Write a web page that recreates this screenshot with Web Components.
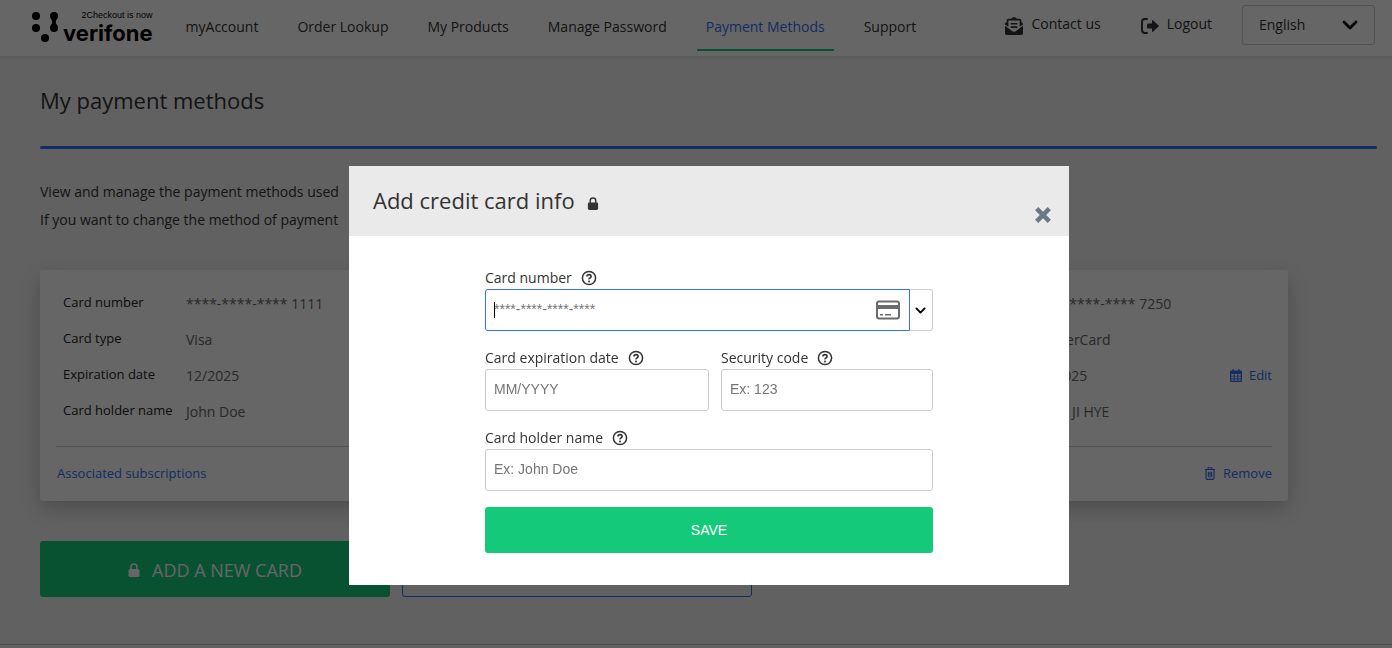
<!DOCTYPE html>
<html lang="en">
<head>
<meta charset="utf-8">
<title>Payment Methods</title>
<style>
    body {
        margin: 0;
        height: 100vh;
        overflow: hidden;
        background: #f2f2f2;
        color: #333;
        font: 14px/20px "Open Sans", sans-serif;
    }
</style>
</head>
<body>
<account-page></account-page>

<script>
const ICONS = {
    mail: ["0 0 512 512", `<path fill="currentColor" d="M176 216h160c8.84 0 16-7.16 16-16v-16c0-8.84-7.16-16-16-16H176c-8.84 0-16 7.16-16 16v16c0 8.84 7.16 16 16 16zm-16 80c0 8.84 7.16 16 16 16h160c8.84 0 16-7.16 16-16v-16c0-8.84-7.16-16-16-16H176c-8.84 0-16 7.16-16 16v16zm96 121.13c-16.42 0-32.84-5.06-46.86-15.19L0 250.86V464c0 26.51 21.49 48 48 48h416c26.51 0 48-21.49 48-48V250.86L302.86 401.94c-14.02 10.12-30.44 15.19-46.86 15.19zm237.61-254.18c-8.85-6.94-17.24-13.47-29.61-22.81V96c0-26.51-21.49-48-48-48h-77.55c-3.04-2.2-5.87-4.26-9.04-6.56C312.6 29.17 279.2-.35 256 0c-23.2-.35-56.59 29.17-73.41 41.44-3.17 2.3-6 4.36-9.04 6.56H96c-26.51 0-48 21.49-48 48v44.14c-12.37 9.33-20.76 15.87-29.61 22.81A47.995 47.995 0 0 0 0 200.72v10.65l96 69.35V96h320v184.72l96-69.35v-10.65c0-14.74-6.78-28.67-18.39-37.77z"/>`],
    logout: ["0 0 18 18", `<path fill="none" stroke="currentColor" stroke-width="2" stroke-linecap="round" d="M6 2H4Q1 2 1 5v8q0 3 3 3h2"/><path fill="currentColor" d="M6 8q0-1.500 1.500-1.500H11V4q0-1.500 1.200-.5l5.400 5q.6.500 0 1l-5.400 5q-1.200 1-1.200-.5v-2.500H7.500Q6 11.500 6 10z"/>`],
    chevron: ["0 0 16 16", `<path fill="none" stroke="currentColor" stroke-width="2.800" stroke-linecap="round" stroke-linejoin="round" d="M2 5l6 6 6-6"/>`],
    lock: ["0 0 12 14", `<path fill="none" stroke="currentColor" stroke-width="1.500" d="M3 7V4a3 3 0 0 1 6 0v3"/><rect x=".5" y="6" width="11" height="8" rx="1.500" fill="currentColor"/>`],
    close: ["0 0 16 16", `<path fill="none" stroke="currentColor" stroke-width="4.500" d="M1.700 1.700l12.600 12.600M14.300 1.700L1.700 14.300"/>`],
    help: ["0 0 16 16", `<g fill="none" stroke="currentColor" stroke-width="1.500"><circle cx="8" cy="8" r="6.600"/><path stroke-width="1.700" d="M5.900 6.500Q6 4.600 8 4.600t2.100 1.700Q10.100 7.300 9 7.900T8 9.400"/></g><circle cx="8" cy="11.400" r="1" fill="currentColor"/>`],
    card: ["0 0 24 20", `<rect x="1" y="1.500" width="22" height="17" rx="2" fill="none" stroke="currentColor" stroke-width="2"/><path fill="currentColor" d="M1 5h22v4H1zM4 14h3v1.500H4zM9 14h6v1.500H9z"/>`],
    calendar: ["0 0 12 13", `<path fill="currentColor" fill-rule="evenodd" d="M2.500 0h1.300v1.500h4.400V0h1.300v1.500H11q1 0 1 1V12q0 1-1 1H1q-1 0-1-1V2.500q0-1 1-1h1.500zM1.300 5v1.700h2.400V5zm3.400 0v1.700h2.600V5zm3.600 0v1.700h2.400V5zM1.300 7.600v1.700h2.400V7.600zm3.400 0v1.700h2.600V7.600zm3.600 0v1.700h2.400V7.600zM1.300 10.200v1.600h2.400v-1.600zm3.400 0v1.600h2.600v-1.600zm3.600 0v1.600h2.400v-1.600z"/>`],
    trash: ["0 0 12 14", `<path fill="none" stroke="currentColor" stroke-width="1.200" d="M.5 2.700h11M4 2.500V.8h4v1.700M1.700 3v8.800q0 1.500 1.500 1.500h5.600q1.500 0 1.500-1.500V3M4.200 5v6M6 5v6M7.800 5v6"/>`],
    dots: ["0 0 28 32", `<g fill="currentColor"><circle cx="5" cy="5" r="4"/><circle cx="23" cy="5" r="4"/><circle cx="5" cy="17" r="4"/><circle cx="23" cy="17" r="4"/><circle cx="14" cy="27" r="4"/><path d="M20 7.600Q22.500 11 20 14.400h6Q23.500 11 26 7.600z"/></g>`]
};

/** <app-icon name="lock"></app-icon>, sized by its user */
class AppIcon extends HTMLElement {
    connectedCallback() {
        const [viewBox, shapes] = ICONS[this.getAttribute("name")];
        const shadow = this.attachShadow({ mode: "open" });

        shadow.innerHTML = `
            <style>
                :host { display: inline-block; flex: none; width: 16px; height: 16px; }
                svg { display: block; width: 100%; height: 100%; }
            </style>
            <svg viewBox="${viewBox}" aria-hidden="true">${shapes}</svg>
        `;
    }
}

class SiteLogo extends HTMLElement {
    connectedCallback() {
        const shadow = this.attachShadow({ mode: "open" });

        shadow.innerHTML = `
            <style>
                :host { display: block; color: #000; }
                a { display: flex; gap: 4px; color: inherit; text-decoration: none; }
                app-icon { width: 28px; height: 32px; }
                .words { display: grid; justify-items: end; align-content: start; }
                small { font: 9px/9px "Liberation Sans", sans-serif; }
                b { font: 700 22px/26px Inter, sans-serif; }
            </style>
            <a href="#">
                <app-icon name="dots"></app-icon>
                <span class="words"><small>2Checkout is now</small><b>verifone</b></span>
            </a>
        `;
    }
}

class NavLink extends HTMLElement {
    connectedCallback() {
        const shadow = this.attachShadow({ mode: "open" });

        shadow.innerHTML = `
            <style>
                :host { display: block; }
                a {
                    display: block;
                    padding: 17px 9px 12px;
                    border-bottom: 2px solid transparent;
                    color: inherit;
                    text-decoration: none;
                    white-space: nowrap;
                }
                :host([active]) a { color: #346ff6; border-color: #14ca7a; }
            </style>
            <a href="#"><slot></slot></a>
        `;
    }
}

class SiteHeader extends HTMLElement {
    connectedCallback() {
        const shadow = this.attachShadow({ mode: "open" });

        shadow.innerHTML = `
            <style>
                :host {
                    display: flex;
                    align-items: flex-start;
                    height: 56px;
                    padding: 0 17px 0 31px;
                    background: #fff;
                    box-shadow: 0 1px 4px rgba(0, 0, 0, .1);
                }
                site-logo { margin: 11px 24px 0 0; }
                nav { display: flex; gap: 21px; flex: 1; }
                .tools { display: flex; gap: 30px; }
                .tool {
                    display: flex;
                    gap: 8px;
                    padding-top: 14px;
                    color: inherit;
                    text-decoration: none;
                    white-space: nowrap;
                }
                .tool + .tool { margin-left: 10px; }
                .tool app-icon { width: 18px; height: 18px; margin-top: 3px; }
                .language { display: grid; margin-top: 5px; }
                .language > * { grid-area: 1 / 1; }
                select {
                    appearance: none;
                    width: 133px;
                    height: 40px;
                    padding: 0 16px;
                    border: 1px solid #ccc;
                    border-radius: 3px;
                    background: #fff;
                    color: inherit;
                    font: inherit;
                }
                .language app-icon {
                    place-self: center end;
                    margin-right: 17px;
                    color: #000;
                    pointer-events: none;
                }
            </style>
            <site-logo></site-logo>
            <nav>
                <nav-link>myAccount</nav-link>
                <nav-link>Order Lookup</nav-link>
                <nav-link>My Products</nav-link>
                <nav-link>Manage Password</nav-link>
                <nav-link active>Payment Methods</nav-link>
                <nav-link>Support</nav-link>
            </nav>
            <div class="tools">
                <a class="tool" href="#"><app-icon name="mail"></app-icon>Contact us</a>
                <a class="tool" href="#"><app-icon name="logout"></app-icon>Logout</a>
                <div class="language">
                    <select aria-label="Language"><option>English</option></select>
                    <app-icon name="chevron"></app-icon>
                </div>
            </div>
        `;
    }
}

/**
 * <payment-card number="0000" type="Visa" expires="MM/YYYY" holder="NAME"></payment-card>
 */
class PaymentCard extends HTMLElement {
    connectedCallback() {
        this.render();
    }

    getRow(label, value, extra = "") {
        return `<div class="row"><dt>${label}</dt><dd>${value}</dd>${extra}</div>`;
    }

    render() {
        const shadow = this.attachShadow({ mode: "open" });
        const edit = `<dd class="action"><a href="#"><app-icon name="calendar"></app-icon>Edit</a></dd>`;

        shadow.innerHTML = `
            <style>
                :host {
                    display: block;
                    padding: 16px;
                    border-radius: 3px;
                    background: #fff;
                    box-shadow: 0 8px 20px rgba(0, 0, 0, .2);
                }
                dl { margin: 0; padding: 0 0 16px 7px; border-bottom: 1px solid #ccc; }
                .row { display: flex; height: 36px; }
                dt { width: 123px; padding-top: 6px; color: #222; font-size: 13px; }
                dd { margin: 0; padding-top: 8px; color: #666; white-space: nowrap; }
                .action { margin-left: auto; padding-top: 7px; }
                a {
                    display: flex;
                    align-items: center;
                    gap: 7px;
                    color: #346ff6;
                    font-size: 13px;
                    text-decoration: none;
                }
                app-icon { width: 12px; height: 13px; }
                footer {
                    display: flex;
                    justify-content: space-between;
                    padding: 16px 0 2px 1px;
                }
            </style>
            <dl>
                ${this.getRow("Card number", `****-****-**** ${this.getAttribute("number")}`)}
                ${this.getRow("Card type", this.getAttribute("type"))}
                ${this.getRow("Expiration date", this.getAttribute("expires"), edit)}
                ${this.getRow("Card holder name", this.getAttribute("holder"))}
            </dl>
            <footer>
                <a href="#">Associated subscriptions</a>
                <a href="#"><app-icon name="trash"></app-icon>Remove</a>
            </footer>
        `;
    }
}

/** <form-field label="Name" hint="Placeholder"></form-field> */
class FormField extends HTMLElement {
    connectedCallback() {
        this.render();
    }

    renderStyle() {
        return `
            <style>
                :host { display: block; min-width: 0; }
                .caption { display: flex; gap: 9px; height: 20px; line-height: 18px; }
                .caption app-icon { margin-top: 1px; }
                .box { display: flex; }
                .control { display: grid; flex: 1; }
                .control > * { grid-area: 1 / 1; }
                input {
                    box-sizing: border-box;
                    width: 100%;
                    height: 42px;
                    padding: 0 8px 2px;
                    border: 1px solid #ccc;
                    border-radius: 3px;
                    outline: 0;
                    background: #fff;
                    color: #333;
                    font: 14px "Liberation Sans", Arial, sans-serif;
                }
                input::placeholder { color: #757575; }
                .picker input { border-color: #346ff6; border-radius: 3px 0 0 3px; caret-color: transparent; }
                .caret { align-self: center; width: 1px; height: 16px; margin-left: 9px; background: #000; }
                .picker app-icon { pointer-events: none; }
                .control app-icon {
                    place-self: center end;
                    width: 24px;
                    height: 20px;
                    margin-right: 10px;
                    color: #6b6b6b;
                }
                button {
                    display: grid;
                    place-items: center;
                    width: 23px;
                    padding: 0 2px 0 0;
                    border: 1px solid #ccc;
                    border-left: 0;
                    border-radius: 0 3px 3px 0;
                    background: #fff;
                    color: #000;
                }
                button app-icon { width: 11px; height: 11px; }
            </style>
        `;
    }

    render() {
        const shadow = this.attachShadow({ mode: "open", delegatesFocus: true });
        const picker = this.hasAttribute("picker");

        shadow.innerHTML = `
            ${this.renderStyle()}
            <div class="caption">
                <label for="field">${this.getAttribute("label")}</label>
                <app-icon name="help"></app-icon>
            </div>
            <div class="box ${picker ? "picker" : ""}">
                <div class="control">
                    <input id="field" type="text" placeholder="${this.getAttribute("hint")}">
                    ${picker ? `<i class="caret"></i><app-icon name="card"></app-icon>` : ""}
                </div>
                ${picker ? `<button type="button" aria-label="Card types"><app-icon name="chevron"></app-icon></button>` : ""}
            </div>
        `;
    }
}

class CardDialog extends HTMLElement {
    connectedCallback() {
        const shadow = this.attachShadow({ mode: "open" });

        shadow.innerHTML = `
            <style>
                :host {
                    position: fixed;
                    inset: 0;
                    display: flex;
                    justify-content: center;
                    align-items: flex-start;
                    padding: 166px 0 0 26px;
                    background: rgba(0, 0, 0, .6);
                }
                section { width: 100%; max-width: 720px; background: #fff; }
                header {
                    display: flex;
                    justify-content: space-between;
                    height: 70px;
                    box-sizing: border-box;
                    padding: 20px 18px 0 24px;
                    background: #eaeaea;
                }
                h2 {
                    display: flex;
                    gap: 12px;
                    margin: 0;
                    font-size: 22px;
                    font-weight: 400;
                    line-height: 28px;
                }
                h2 app-icon { width: 12px; height: 13px; margin-top: 11px; }
                button { border: 0; padding: 0; cursor: pointer; }
                .close { align-self: flex-start; margin-top: 21px; background: none; color: #6c7885; }
                .close app-icon { display: block; }
                form { display: grid; gap: 18px; padding: 33px 136px 32px; }
                .pair { display: grid; grid-template-columns: 1fr 212px; gap: 12px; }
                .save {
                    height: 46px;
                    margin-top: -2px;
                    border-radius: 3px;
                    background: #14ca7a;
                    color: #fff;
                    font: 14px "Liberation Sans", Arial, sans-serif;
                }
            </style>
            <section role="dialog" aria-modal="true" aria-labelledby="title">
                <header>
                    <h2 id="title">Add credit card info<app-icon name="lock"></app-icon></h2>
                    <button class="close" aria-label="Close"><app-icon name="close"></app-icon></button>
                </header>
                <form>
                    <form-field picker label="Card number" hint="****-****-****-****"></form-field>
                    <div class="pair">
                        <form-field label="Card expiration date" hint="MM/YYYY"></form-field>
                        <form-field label="Security code" hint="Ex: 123"></form-field>
                    </div>
                    <form-field label="Card holder name" hint="Ex: John Doe"></form-field>
                    <button class="save" type="button">SAVE</button>
                </form>
            </section>
        `;

        shadow.querySelector("form-field").focus();
    }
}

class AccountPage extends HTMLElement {
    connectedCallback() {
        const shadow = this.attachShadow({ mode: "open" });

        shadow.innerHTML = `
            <style>
                :host { display: flex; flex-direction: column; height: 100vh; }
                site-header, main { flex: none; }
                main { padding: 30px 15px 47px 40px; }
                h1 { margin: 0; font-size: 22px; font-weight: 400; line-height: 28px; }
                hr { height: 3px; margin: 32px 0 29px; border: 0; border-radius: 2px; background: #346ff6; }
                p { margin: 0; line-height: 28px; }
                .cards {
                    display: grid;
                    grid-template-columns: repeat(auto-fill, 400px);
                    gap: 24px;
                    margin-top: 36px;
                }
                .actions { display: flex; gap: 12px; margin-top: 40px; }
                button {
                    display: flex;
                    justify-content: center;
                    align-items: center;
                    gap: 12px;
                    width: 350px;
                    height: 56px;
                    padding: 2px 0 0;
                    border: 0;
                    border-radius: 3px;
                    background: #14ca7a;
                    color: #fff;
                    font: 18px "Open Sans", sans-serif;
                }
                button app-icon { width: 12px; height: 14px; }
                .outline { border: 1px solid #346ff6; background: none; }
                footer { flex: 1; border-top: 1px solid #bbb; background: #f7f7f7; }
            </style>
            <site-header></site-header>
            <main>
                <h1>My payment methods</h1>
                <hr>
                <p>View and manage the payment methods used</p>
                <p>If you want to change the method of payment</p>
                <div class="cards">
                    <payment-card number="1111" type="Visa" expires="12/2025" holder="John Doe"></payment-card>
                    <payment-card number="1111" type="Visa" expires="12/2025" holder="John Doe"></payment-card>
                    <payment-card number="7250" type="MasterCard" expires="12/2025" holder="PARK JI HYE"></payment-card>
                </div>
                <div class="actions">
                    <button type="button"><app-icon name="lock"></app-icon>ADD A NEW CARD</button>
                    <button class="outline" type="button" aria-label="More options"></button>
                </div>
            </main>
            <footer></footer>
            <card-dialog></card-dialog>
        `;
    }
}

customElements.define("app-icon", AppIcon);
customElements.define("site-logo", SiteLogo);
customElements.define("nav-link", NavLink);
customElements.define("site-header", SiteHeader);
customElements.define("payment-card", PaymentCard);
customElements.define("form-field", FormField);
customElements.define("card-dialog", CardDialog);
customElements.define("account-page", AccountPage);
</script>
</body>
</html>
